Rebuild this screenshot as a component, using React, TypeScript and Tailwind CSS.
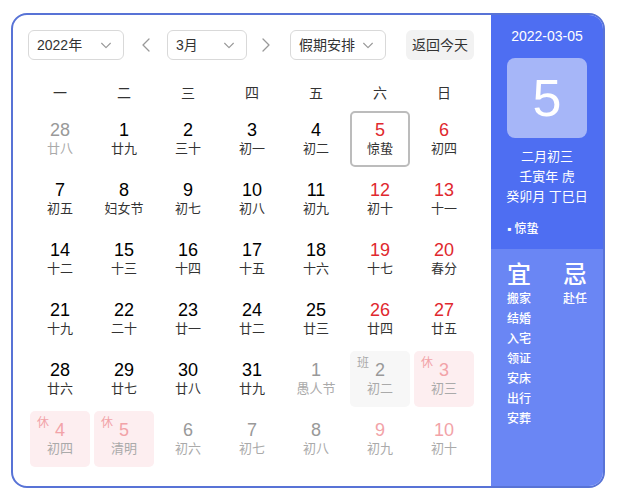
import React from 'react';

type Day = {
  n: number;
  lunar: string;
  other?: boolean;
  weekend?: boolean;
  tag?: '休' | '班';
  selected?: boolean;
};

const weekdays = ['一', '二', '三', '四', '五', '六', '日'];

const rows: Day[][] = [
  [
    { n: 28, lunar: '廿八', other: true },
    { n: 1, lunar: '廿九' },
    { n: 2, lunar: '三十' },
    { n: 3, lunar: '初一' },
    { n: 4, lunar: '初二' },
    { n: 5, lunar: '惊蛰', weekend: true, selected: true },
    { n: 6, lunar: '初四', weekend: true },
  ],
  [
    { n: 7, lunar: '初五' },
    { n: 8, lunar: '妇女节' },
    { n: 9, lunar: '初七' },
    { n: 10, lunar: '初八' },
    { n: 11, lunar: '初九' },
    { n: 12, lunar: '初十', weekend: true },
    { n: 13, lunar: '十一', weekend: true },
  ],
  [
    { n: 14, lunar: '十二' },
    { n: 15, lunar: '十三' },
    { n: 16, lunar: '十四' },
    { n: 17, lunar: '十五' },
    { n: 18, lunar: '十六' },
    { n: 19, lunar: '十七', weekend: true },
    { n: 20, lunar: '春分', weekend: true },
  ],
  [
    { n: 21, lunar: '十九' },
    { n: 22, lunar: '二十' },
    { n: 23, lunar: '廿一' },
    { n: 24, lunar: '廿二' },
    { n: 25, lunar: '廿三' },
    { n: 26, lunar: '廿四', weekend: true },
    { n: 27, lunar: '廿五', weekend: true },
  ],
  [
    { n: 28, lunar: '廿六' },
    { n: 29, lunar: '廿七' },
    { n: 30, lunar: '廿八' },
    { n: 31, lunar: '廿九' },
    { n: 1, lunar: '愚人节', other: true },
    { n: 2, lunar: '初二', other: true, tag: '班' },
    { n: 3, lunar: '初三', other: true, weekend: true, tag: '休' },
  ],
  [
    { n: 4, lunar: '初四', other: true, weekend: true, tag: '休' },
    { n: 5, lunar: '清明', other: true, weekend: true, tag: '休' },
    { n: 6, lunar: '初六', other: true },
    { n: 7, lunar: '初七', other: true },
    { n: 8, lunar: '初八', other: true },
    { n: 9, lunar: '初九', other: true, weekend: true },
    { n: 10, lunar: '初十', other: true, weekend: true },
  ],
];

const yi = ['搬家', '结婚', '入宅', '领证', '安床', '出行', '安葬'];
const ji = ['赴任'];

const Chevron = ({ dir = 'down', className = '' }: { dir?: 'down' | 'left' | 'right'; className?: string }) => {
  const d = dir === 'down' ? 'M3 6l5 5 5-5' : dir === 'left' ? 'M10 2L4 8l6 6' : 'M6 2l6 6-6 6';
  return (
    <svg viewBox="0 0 16 16" className={className} fill="none" stroke="currentColor" strokeWidth="1.3" strokeLinecap="round" strokeLinejoin="round">
      <path d={d} />
    </svg>
  );
};

const Select = ({ label, width }: { label: string; width: string }) => (
  <div className={`${width} h-[30px] flex items-center justify-between pl-[8px] pr-[10px] border border-[#d9d9d9] rounded-[6px] text-[14px] text-[#333]`}>
    <span>{label}</span>
    <Chevron className="w-[14px] h-[14px] text-[#999]" />
  </div>
);

const DayCell = ({ d }: { d: Day }) => {
  let numColor = 'text-black';
  let lunarColor = 'text-[#333]';
  if (d.other) {
    numColor = d.weekend ? 'text-[#f2a3a8]' : 'text-[#999]';
    lunarColor = 'text-[#aaa]';
  } else if (d.weekend) {
    numColor = 'text-[#e0282e]';
  }
  let bg = '';
  if (d.tag === '休') bg = 'bg-[#fdeef0]';
  if (d.tag === '班') bg = 'bg-[#f7f7f7]';
  const border = d.selected ? 'border-2 border-[#bcbcbc]' : 'border-2 border-transparent';

  return (
    <div className={`relative m-[2px] h-[56px] rounded-[5px] flex flex-col items-center justify-center ${bg} ${border}`}>
      {d.tag && (
        <span className={`absolute left-[5px] top-[1px] text-[12px] ${d.tag === '休' ? 'text-[#f2a3a8]' : 'text-[#aaa]'}`}>{d.tag}</span>
      )}
      <span className={`text-[18px] leading-[20px] ${numColor}`}>{d.n}</span>
      <span className={`text-[13px] leading-[18px] ${lunarColor}`}>{d.lunar}</span>
    </div>
  );
};

export default function App() {
  return (
    <div className="bg-white w-[617px] h-[491px] pt-[13px] pl-[11px]" style={{ fontFamily: '"Liberation Sans", "Noto Sans CJK SC", sans-serif' }}>
      <div className="w-[594px] h-[475px] border-2 border-[#5873d6] rounded-[16px] overflow-hidden flex">
        <div className="flex-1 pl-[15px] pt-[15px]">
          <div className="flex items-center h-[30px]">
            <Select label="2022年" width="w-[96px]" />
            <Chevron dir="left" className="w-[16px] h-[16px] text-[#999] ml-[15px]" />
            <div className="ml-[12px]">
              <Select label="3月" width="w-[80px]" />
            </div>
            <Chevron dir="right" className="w-[16px] h-[16px] text-[#999] ml-[10px]" />
            <div className="ml-[17px]">
              <Select label="假期安排" width="w-[96px]" />
            </div>
            <button className="ml-[20px] w-[68px] h-[30px] rounded-[6px] bg-[#f2f2f2] text-[14px] text-[#333]">返回今天</button>
          </div>
          <div className="grid grid-cols-7 w-[448px] mt-[18px]">
            {weekdays.map(w => (
              <div key={w} className="h-[30px] flex items-center justify-center text-[14px] text-[#333]">{w}</div>
            ))}
          </div>
          <div className="grid grid-cols-7 w-[448px] mt-[1px]">
            {rows.flat().map((d, i) => (
              <DayCell key={i} d={d} />
            ))}
          </div>
        </div>
        <div className="w-[112px] flex flex-col text-white">
          <div className="h-[234px] bg-[#4e6ef2] flex flex-col items-center pt-[12px]">
            <div className="text-[14px] leading-[18px]">2022-03-05</div>
            <div className="mt-[13px] w-[80px] h-[80px] rounded-[8px] bg-[#a6b6f8] flex items-center justify-center text-[52px] leading-none">5</div>
            <div className="mt-[9px] text-[13px] leading-[20px] text-center">
              <div>二月初三</div>
              <div>壬寅年 虎</div>
              <div>癸卯月 丁巳日</div>
            </div>
            <div className="self-start ml-[16px] mt-[13px] text-[12px] font-medium">▪ 惊蛰</div>
          </div>
          <div className="flex-1 bg-[#6a86f4] flex pl-[16px] pt-[12px]">
            <div className="flex flex-col w-[56px]">
              <div className="text-[24px] leading-[28px] font-medium">宜</div>
              {yi.map(t => (
                <div key={t} className="text-[12px] leading-[20px] font-medium">{t}</div>
              ))}
            </div>
            <div className="flex flex-col">
              <div className="text-[24px] leading-[28px] font-medium">忌</div>
              {ji.map(t => (
                <div key={t} className="text-[12px] leading-[20px] font-medium">{t}</div>
              ))}
            </div>
          </div>
        </div>
      </div>
    </div>
  );
}
